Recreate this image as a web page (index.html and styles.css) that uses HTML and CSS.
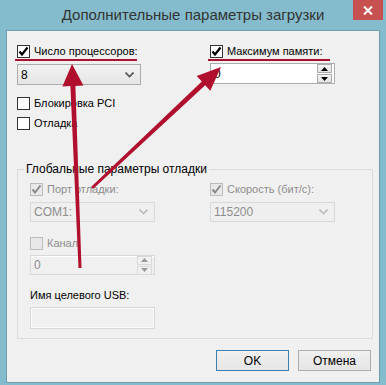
FILE: index.html
```html
<!DOCTYPE html>
<html lang="ru">
<head>
  <meta charset="UTF-8" />
  <title>Дополнительные параметры загрузки</title>
  <link rel="stylesheet" href="styles.css">
</head>
<body>

<div class="janela">
  <div class="barra-titulo">
    <h1 class="titulo">Дополнительные параметры загрузки</h1>
    <button class="fechar">
      <svg width="10" height="9" viewBox="0 0 10 9"><path d="M1 0.5 L9 8.5 M9 0.5 L1 8.5" stroke="#fff" stroke-width="2"/></svg>
    </button>
  </div>

  <div class="cliente">
    <div class="topo">
      <div class="coluna">
        <div class="check marcado destaque">
          <span class="caixa"><svg width="11" height="11" viewBox="0 0 11 11"><path d="M1.5 5.5 L4 8.5 L9.5 1.5" fill="none" stroke="#000" stroke-width="2.2"/></svg></span>
          Число процессоров:
        </div>
        <div class="seletor">
          <span>8</span>
          <svg width="9" height="6" viewBox="0 0 9 6"><path d="M0.5 0.5 L4.5 4.5 L8.5 0.5" fill="none" stroke="#555" stroke-width="1.6"/></svg>
        </div>
        <div class="check pci"><span class="caixa"></span>Блокировка PCI</div>
        <div class="check depurar"><span class="caixa"></span>Отладка</div>
      </div>
      <div class="coluna">
        <div class="check marcado destaque">
          <span class="caixa"><svg width="11" height="11" viewBox="0 0 11 11"><path d="M1.5 5.5 L4 8.5 L9.5 1.5" fill="none" stroke="#000" stroke-width="2.2"/></svg></span>
          Максимум памяти:
        </div>
        <div class="contador">
          <span class="valor">0</span>
          <div class="setas">
            <span><svg width="7" height="4" viewBox="0 0 7 4"><path d="M0 4 L3.5 0 L7 4 Z" fill="#000"/></svg></span>
            <span><svg width="7" height="4" viewBox="0 0 7 4"><path d="M0 0 L3.5 4 L7 0 Z" fill="#000"/></svg></span>
          </div>
        </div>
      </div>
    </div>

    <div class="grupo">
      <span class="legenda">Глобальные параметры отладки</span>
      <div class="grupo-colunas">
        <div class="gcoluna">
          <div class="check off">
            <span class="caixa"><svg width="11" height="11" viewBox="0 0 11 11"><path d="M1.5 5.5 L4 8.5 L9.5 1.5" fill="none" stroke="#8a8a8a" stroke-width="2"/></svg></span>
            Порт отладки:
          </div>
          <div class="seletor off">
            <span>COM1:</span>
            <svg width="9" height="6" viewBox="0 0 9 6"><path d="M0.5 0.5 L4.5 4.5 L8.5 0.5" fill="none" stroke="#bdbdbd" stroke-width="1.6"/></svg>
          </div>
          <div class="check off canal"><span class="caixa"></span>Канал</div>
          <div class="contador off">
            <span class="valor">0</span>
            <div class="setas">
              <span><svg width="7" height="4" viewBox="0 0 7 4"><path d="M0 4 L3.5 0 L7 4 Z" fill="#999"/></svg></span>
              <span><svg width="7" height="4" viewBox="0 0 7 4"><path d="M0 0 L3.5 4 L7 0 Z" fill="#999"/></svg></span>
            </div>
          </div>
          <div class="rotulo-usb">Имя целевого USB:</div>
          <div class="campo off"></div>
        </div>
        <div class="gcoluna">
          <div class="check off">
            <span class="caixa"><svg width="11" height="11" viewBox="0 0 11 11"><path d="M1.5 5.5 L4 8.5 L9.5 1.5" fill="none" stroke="#8a8a8a" stroke-width="2"/></svg></span>
            Скорость (бит/с):
          </div>
          <div class="seletor off">
            <span>115200</span>
            <svg width="9" height="6" viewBox="0 0 9 6"><path d="M0.5 0.5 L4.5 4.5 L8.5 0.5" fill="none" stroke="#bdbdbd" stroke-width="1.6"/></svg>
          </div>
        </div>
      </div>
    </div>

    <div class="botoes">
      <button class="botao padrao">OK</button>
      <button class="botao">Отмена</button>
    </div>
  </div>

  <!-- setas vermelhas por cima -->
  <svg class="setas-anotacao" width="386" height="385" viewBox="0 0 386 385">
    <polygon points="78.5,268 70.4,86 62.4,86.4 72,64 83.4,85.6 75.4,86 81.5,268" fill="#b10f2e"/>
    <polygon points="91,186.9 201.8,81.6 196.7,76.1 221,67 210.3,90.7 205.2,85.2 93,189.1" fill="#b10f2e"/>
  </svg>
</div>

</body>
</html>
```

FILE: styles.css
```css
body {
  margin: 0;
  background-color: #84bccd;
  font-family: "Liberation Sans", Arial, sans-serif;
  font-size: 11px;
  color: #000;
}

.janela {
  position: relative;
  width: 386px;
  height: 385px;
}

.barra-titulo {
  display: grid;
  grid-template-columns: 1fr auto 1fr;
  height: 30px;
}

.titulo {
  grid-column: 2;
  margin: 0;
  font-size: 15px;
  font-weight: normal;
  line-height: 30px;
  color: #333;
}

.fechar {
  justify-self: end;
  width: 30px;
  height: 20px;
  margin-right: 3px;
  padding: 0;
  border: none;
  background-color: #c75050;
  display: flex;
  align-items: center;
  justify-content: center;
}

.cliente {
  margin-left: 6px;
  width: 374px;
  height: 353px;
  box-sizing: border-box;
  border: 1px solid #6d9eb0;
  background-color: #f0f0f0;
  padding: 14px 7px 0 10px;
}

.topo {
  display: flex;
}

.coluna {
  width: 193px;
  flex: none;
}

.check {
  display: flex;
  align-items: center;
  gap: 4px;
  height: 13px;
  line-height: 13px;
  white-space: nowrap;
}

.caixa {
  width: 13px;
  height: 13px;
  box-sizing: border-box;
  border: 1px solid #333;
  background-color: #fff;
  display: flex;
  align-items: center;
  justify-content: center;
  flex: none;
}

.destaque {
  width: 120px;
  margin-left: -2px;
  padding-left: 2px;
  padding-bottom: 1px;
  border-bottom: 2px solid #a9132f;
}

.seletor {
  margin-top: 3px;
  width: 124px;
  height: 21px;
  box-sizing: border-box;
  border: 1px solid #acacac;
  background: linear-gradient(#f2f2f2, #e5e5e5);
  display: flex;
  align-items: center;
  justify-content: space-between;
  padding: 0 6px 0 3px;
  font-size: 12px;
}

.pci {
  margin-top: 12px;
}

.depurar {
  margin-top: 7px;
}

.contador {
  margin-top: 2px;
  width: 125px;
  height: 21px;
  box-sizing: border-box;
  border: 1px solid #abadb3;
  background-color: #fff;
  display: flex;
  align-items: center;
  padding-left: 3px;
  font-size: 12px;
}

.setas {
  margin-left: auto;
  margin-right: 2px;
  width: 15px;
  display: flex;
  flex-direction: column;
  gap: 1px;
}

.setas span {
  height: 7px;
  border: 1px solid #acacac;
  background: linear-gradient(#f4f4f4, #e4e4e4);
  display: flex;
  align-items: center;
  justify-content: center;
}

.grupo {
  margin-top: 39px;
  width: 356px;
  height: 170px;
  box-sizing: border-box;
  border: 1px solid #dcdcdc;
  padding: 0 0 0 12px;
}

.legenda {
  display: block;
  width: fit-content;
  margin: -8px 0 0 -6px;
  padding: 0 2px;
  background-color: #f0f0f0;
  line-height: 15px;
  font-size: 12px;
}

.grupo-colunas {
  display: flex;
  margin-top: 6px;
}

.gcoluna {
  width: 180px;
  flex: none;
}

.off {
  color: #8d8d8d;
}

.off .caixa {
  border-color: #bcbcbc;
  background-color: #e8e8e8;
}

.seletor.off {
  margin-top: 6px;
  width: 125px;
  height: 20px;
  border-color: #d9d9d9;
  background: #efefef;
}

.canal {
  margin-top: 15px;
}

.contador.off {
  margin-top: 5px;
  height: 20px;
  border-color: #d9d9d9;
  background-color: #f0f0f0;
  box-shadow: inset 0 1px 0 #fff;
}

.contador.off .setas span {
  border-color: #d9d9d9;
  background: #f0f0f0;
}

.rotulo-usb {
  margin-top: 14px;
  line-height: 13px;
}

.campo {
  margin-top: 5px;
  width: 125px;
  height: 22px;
  box-sizing: border-box;
  border: 1px solid #d9d9d9;
  background-color: #f0f0f0;
  box-shadow: inset 0 0 0 1px #fafafa;
}

.botoes {
  display: flex;
  justify-content: flex-end;
  gap: 9px;
  margin-top: 11px;
  margin-right: 1px;
}

.botao {
  width: 73px;
  height: 21px;
  padding: 0;
  border: 1px solid #acacac;
  background: linear-gradient(#f0f0f0, #e5e5e5);
  font-family: "Liberation Sans", Arial, sans-serif;
  font-size: 12px;
  color: #000;
}

.botao.padrao {
  border-color: #3c7fb1;
}

.setas-anotacao {
  position: absolute;
  top: 0;
  left: 0;
  pointer-events: none;
}
```
